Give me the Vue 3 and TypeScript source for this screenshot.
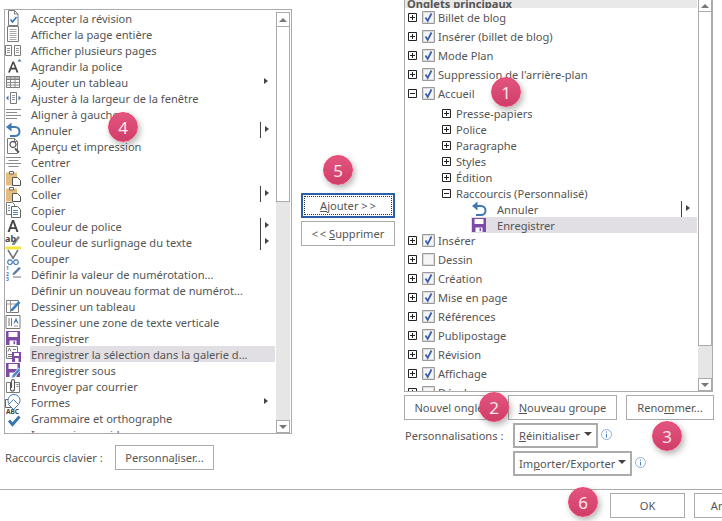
<script setup lang="ts">
interface Shape { d: string; f?: string; s?: string; w?: number }
const G = '#7a7a7a'
const B = '#3f78b5'
const P = '#7d4ba6'
const T = '#e6bd7c'
const saveBase: Shape[] = [
  { d: 'M1 1h14v14H1z', f: P },
  { d: 'M3.500 2h9v5h-9z', f: '#fff' },
  { d: 'M4.500 10.500h7V15h-7z', f: '#fff' },
  { d: 'M8.500 11.200h1.600v3H8.500z', f: P },
]
const icons: Record<string, Shape[]> = {
  check: [
    { d: 'M3.500 .5h6l3.500 3.500v11.500H3.500z', f: '#fff', s: G },
    { d: 'M9.500 .5V4H13', s: G },
    { d: 'M5.500 9.500l2 2.500 4-5', s: '#2f6fc0', w: 1.600 },
  ],
  page: [
    { d: 'M2.500 .5h11v15h-11z', f: '#fff', s: G },
    { d: 'M4.500 3.500h7M4.500 5.500h7M4.500 7.500h7M4.500 9.500h7M4.500 11.500h7M4.500 13.500h7', s: '#a8a8a8' },
  ],
  pages: [
    { d: 'M.5 3.500h6v10h-6zM9.500 3.500h6v10h-6z', f: '#fff', s: G },
    { d: 'M2 6.500h3M2 8.500h3M2 10.500h3M11 6.500h3M11 8.500h3M11 10.500h3', s: '#999' },
  ],
  grow: [
    { d: 'M3 14.500L7.500 3.500h1.500l4.500 11h-2l-1-3H6l-1 3zM6.700 9.800h3.100L8.200 5.400z', f: '#444' },
    { d: 'M12.500 3.500l2-2.500 2 2.500z', f: B },
  ],
  table: [
    { d: 'M1.500 2.500h13v11h-13z', f: '#fff', s: G },
    { d: 'M1.500 2.500h13v3h-13z', f: '#bbb', s: G },
    { d: 'M1.500 8.500h13M1.500 11h13M5.500 2.500v11M10 2.500v11', s: '#8a8a8a' },
  ],
  fit: [
    { d: 'M5.500 2.500h6v11h-6z', f: '#fff', s: G },
    { d: 'M7 5.500h3M7 7.500h3M7 9.500h3', s: '#999' },
    { d: 'M1 8l2.500-2.500v5zM16 8l-2.500-2.500v5z', f: B },
  ],
  left: [{ d: 'M1 3.500h15M1 6.500h11M1 9.500h15M1 12.500h11', s: '#8a8a8a' }],
  center: [{ d: 'M1 3.500h15M3.500 6.500h10M1 9.500h15M3.500 12.500h10', s: '#8a8a8a' }],
  undo: [
    { d: 'M4.500 5h5.500a4.500 4.500 0 0 1 0 9h-5', s: B, w: 2 },
    { d: 'M6.500 .5L1 5l5.500 4.500z', f: B },
  ],
  preview: [
    { d: 'M2.500 .5h7l3 3v12h-10z', f: '#fff', s: G },
    { d: 'M9.500 .5v3h3', s: G },
    { d: 'M8 9.500a3 3 0 1 0-.01 0z', f: '#fff', s: '#555', w: 1.300 },
    { d: 'M10 10.500l4 4', s: '#555', w: 1.800 },
  ],
  paste: [
    { d: 'M1 2.500h11v13H1z', f: T },
    { d: 'M4.500 1.500h4v2.500h-4z', f: '#fff', s: '#666' },
    { d: 'M7.500 7.500h5l3 3v5h-8z', f: '#fff', s: '#555' },
  ],
  copy: [
    { d: 'M1.500 .5h6l2 2v10h-8z', f: '#fff', s: G },
    { d: 'M6.500 4.500h6l3 3v8h-9z', f: '#fff', s: '#666' },
    { d: 'M3 3.500h2M3 6h2M3 8.500h2M8 8.500h5M8 10.500h5M8 12.500h5', s: '#5a87b8' },
  ],
  fontcolor: [{ d: 'M2.500 14L7 2h2l4.500 12h-2l-1.100-3H5.700l-1.100 3zM6.300 9.300h3.400L8 4.500z', f: '#444' }],
  mark: [
    { d: 'M.5 12.500h15.500v2.800H.5z', f: '#f5e63a' },
    { d: 'M7 9.500l6-7.500 2 1.500-5.500 7.500H7z', f: '#8a8a8a' },
  ],
  cut: [
    { d: 'M3 0l5.500 9M13 0L7.500 9', s: '#777', w: 1.600 },
    { d: 'M5 14.500a2.300 2.300 0 1 0-.01 0zM11 14.500a2.300 2.300 0 1 0-.01 0z', s: B, w: 1.200, f: '#fff' },
  ],
  num: [
    { d: 'M8 11h8', s: '#777' },
    { d: 'M8 7l6-6 1.800 1.500-6 6-2.400.6z', f: '#5a7da6' },
  ],
  none: [],
  draw: [
    { d: 'M1.500 2.500h12v12h-12z', f: '#fff', s: G },
    { d: 'M1.500 6h12M5.500 2.500v12', s: '#999' },
    { d: 'M6 11l7.500-8 2 1.800-7.500 8-2.500.6z', f: '#3a7fc4' },
  ],
  vtext: [
    { d: 'M1 1.500h14v13H1z', f: '#fff', s: G },
    { d: 'M4 4v8M6.500 4v8', s: '#777' },
    { d: 'M8.500 9.500L11 3.500l2.500 6h-1.200l-.5-1.400h-1.600l-.5 1.400z', f: '#4a7db5' },
    { d: 'M9 12h4', s: '#999' },
  ],
  save: saveBase,
  saveSel: [
    { d: 'M1.500 .5h11v12h-11z', f: '#fff', s: G },
    { d: 'M3 5.500l1.500-3.500 1.500 3.500M8 3.500h3M3 8.500h7M3 10.500h4', s: '#777' },
    { d: 'M7 6h9v10H7z', f: P },
    { d: 'M9 7h5v3H9zM10 12h3.500v4H10z', f: '#fff' },
  ],
  saveAs: [
    ...saveBase,
    { d: 'M7 13.500l6.500-7.500 2.300 2-6.500 7.500-2.800.7z', f: '#4e86c8', s: '#fff', w: .7 },
  ],
  mail: [
    { d: 'M1.500 4.500h13v10h-13z', f: '#fff', s: G },
    { d: 'M5.500 5v6a2 2 0 0 0 4 0V3a1.500 1.500 0 0 0-3 0v7', s: '#555', f: '#fff', w: 1.100 },
    { d: 'M11.500 6.500h2M11.500 8.500h2', s: '#777' },
  ],
  shapes: [
    { d: 'M.5 5.500h8v8h-8z', f: '#fff', s: '#666' },
    { d: 'M9 .5a6 6 0 1 1-.01 0z', f: '#fff', s: B },
    { d: 'M8.500 5.500l5 5-5 5-5-5z', f: '#fff', s: B },
  ],
  spell: [
    { d: 'M4 10.500l3.500 4 7-8', s: '#3674b5', w: 2.800 },
  ],
  quick: [
    { d: 'M1 10h5', s: '#666' },
    { d: 'M6 9h5v5H6z', f: '#fff', s: '#666' },
    { d: 'M12 9a3.500 3.500 0 1 0 .01 0z', f: '#4da98a' },
  ],
}
interface Row { t: string; i: string; sep?: boolean; arrow?: boolean; sel?: boolean; tag?: string }
const commands: Row[] = [
  { t: 'Accepter la révision', i: 'check' },
  { t: 'Afficher la page entière', i: 'page' },
  { t: 'Afficher plusieurs pages', i: 'pages' },
  { t: 'Agrandir la police', i: 'grow' },
  { t: 'Ajouter un tableau', i: 'table', arrow: true },
  { t: 'Ajuster à la largeur de la fenêtre', i: 'fit' },
  { t: 'Aligner à gauche', i: 'left' },
  { t: 'Annuler', i: 'undo', sep: true, arrow: true },
  { t: 'Aperçu et impression', i: 'preview' },
  { t: 'Centrer', i: 'center' },
  { t: 'Coller', i: 'paste' },
  { t: 'Coller', i: 'paste', sep: true, arrow: true },
  { t: 'Copier', i: 'copy' },
  { t: 'Couleur de police', i: 'fontcolor', sep: true, arrow: true },
  { t: 'Couleur de surlignage du texte', i: 'mark', tag: 'ab', sep: true, arrow: true },
  { t: 'Couper', i: 'cut' },
  { t: 'Définir la valeur de numérotation...', i: 'num', tag: 'n' },
  { t: 'Définir un nouveau format de numérot...', i: 'none' },
  { t: 'Dessiner un tableau', i: 'draw' },
  { t: 'Dessiner une zone de texte verticale', i: 'vtext' },
  { t: 'Enregistrer', i: 'save' },
  { t: 'Enregistrer la sélection dans la galerie d...', i: 'saveSel', sel: true },
  { t: 'Enregistrer sous', i: 'saveAs' },
  { t: 'Envoyer par courrier', i: 'mail' },
  { t: 'Formes', i: 'shapes', arrow: true },
  { t: 'Grammaire et orthographe', i: 'spell', tag: 'ABC' },
  { t: 'Impression rapide', i: 'quick' },
]
const tabsTop = [
  { t: 'Billet de blog', c: true },
  { t: 'Insérer (billet de blog)', c: true },
  { t: 'Mode Plan', c: true },
  { t: "Suppression de l'arrière-plan", c: true },
]
const groups = ['Presse-papiers', 'Police', 'Paragraphe', 'Styles', 'Édition']
const tabsBottom = [
  { t: 'Insérer', c: true },
  { t: 'Dessin', c: false },
  { t: 'Création', c: true },
  { t: 'Mise en page', c: true },
  { t: 'Références', c: true },
  { t: 'Publipostage', c: true },
  { t: 'Révision', c: true },
  { t: 'Affichage', c: true },
  { t: 'Développeur', c: false },
]
const badges = [
  { n: 1, cls: 'b1' }, { n: 2, cls: 'b2' }, { n: 3, cls: 'b3' },
  { n: 4, cls: 'b4' }, { n: 5, cls: 'b5' }, { n: 6, cls: 'b6' },
]
</script>

<template>
  <div class="dialog">
    <div class="main">
      <section class="col-left">
        <div class="listbox cmd-box">
          <div class="viewport">
            <div v-for="(r, k) in commands" :key="k" class="cmd">
              <span class="ic">
                <svg width="16" height="16" viewBox="0 0 16 16">
                  <path v-for="(s, j) in icons[r.i]" :key="j" :d="s.d" :fill="s.f || 'none'" :stroke="s.s || 'none'" :stroke-width="s.w || 1" />
                </svg>
                <span v-if="r.tag === 'ab'" class="tag tag-ab">ab</span>
                <span v-if="r.tag === 'ABC'" class="tag tag-abc">ABC</span>
                <span v-if="r.tag === 'n'" class="tag tag-n">1<br>2<br>3</span>
              </span>
              <div class="cmd-body" :class="{ sel: r.sel }">
                <span class="cmd-label">{{ r.t }}</span>
                <span class="tail" :class="{ sep: r.sep }"><i v-if="r.arrow" class="tri"></i></span>
              </div>
            </div>
          </div>
          <div class="scroll">
            <div class="sb-btn"><i class="up"></i></div>
            <div class="thumb thumb-l"></div>
            <div class="track"></div>
            <div class="sb-btn sb-down"><i class="down"></i></div>
          </div>
        </div>
        <div class="shortcut">
          <span class="shortcut-label">Raccourcis clavier :</span>
          <button class="btn btn-perso">Personna<u>l</u>iser...</button>
        </div>
      </section>

      <section class="col-mid">
        <button class="btn btn-add"><span class="dots"><span><u>A</u>jouter &gt;&thinsp;&gt;</span></span></button>
        <button class="btn btn-del">&lt;&thinsp;&lt; <u>S</u>upprimer</button>
      </section>

      <section class="col-right">
        <div class="listbox tree-box">
          <div class="viewport">
            <div class="tree-head">Onglets principaux</div>
            <div v-for="x in tabsTop" :key="x.t" class="tab">
              <svg class="pm" width="9" height="9" viewBox="0 0 9 9"><path d="M.5 .5h8v8h-8zM2 4.500h5M4.500 2v5" fill="#fff" stroke="#222" /></svg>
              <svg class="cb" width="13" height="13" viewBox="0 0 13 13"><path d="M.5 .5h12v12H.5z" fill="#dcdcdc" stroke="#9a9a9a" /><path d="M2 2h9v9H2z" fill="#f6f6f6" /><path d="M3.500 6.500l2.200 3.500 3.800-7.500" fill="none" stroke="#3b5fae" stroke-width="1.800" /></svg>
              <span>{{ x.t }}</span>
            </div>
            <div class="tab">
              <svg class="pm" width="9" height="9" viewBox="0 0 9 9"><path d="M.5 .5h8v8h-8zM2 4.500h5" fill="#fff" stroke="#222" /></svg>
              <svg class="cb" width="13" height="13" viewBox="0 0 13 13"><path d="M.5 .5h12v12H.5z" fill="#dcdcdc" stroke="#9a9a9a" /><path d="M2 2h9v9H2z" fill="#f6f6f6" /><path d="M3.500 6.500l2.200 3.500 3.800-7.500" fill="none" stroke="#3b5fae" stroke-width="1.800" /></svg>
              <span>Accueil</span>
            </div>
            <div class="subs">
              <div v-for="g in groups" :key="g" class="group">
                <svg width="9" height="9" viewBox="0 0 9 9"><path d="M.5 .5h8v8h-8zM2 4.500h5M4.500 2v5" fill="#fff" stroke="#222" /></svg>
                <span>{{ g }}</span>
              </div>
              <div class="group">
                <svg width="9" height="9" viewBox="0 0 9 9"><path d="M.5 .5h8v8h-8zM2 4.500h5" fill="#fff" stroke="#222" /></svg>
                <span>Raccourcis (Personnalisé)</span>
              </div>
              <div class="leaf">
                <svg width="16" height="16" viewBox="0 0 16 16"><path v-for="(s, j) in icons.undo" :key="j" :d="s.d" :fill="s.f || 'none'" :stroke="s.s || 'none'" :stroke-width="s.w || 1" /></svg>
                <span class="leaf-label">Annuler</span>
                <span class="tail sep"><i class="tri"></i></span>
              </div>
              <div class="leaf sel">
                <svg width="16" height="16" viewBox="0 0 16 16"><path v-for="(s, j) in icons.save" :key="j" :d="s.d" :fill="s.f || 'none'" /></svg>
                <span class="leaf-label">Enregistrer</span>
              </div>
            </div>
            <div class="after">
              <div v-for="x in tabsBottom" :key="x.t" class="tab">
                <svg class="pm" width="9" height="9" viewBox="0 0 9 9"><path d="M.5 .5h8v8h-8zM2 4.500h5M4.500 2v5" fill="#fff" stroke="#222" /></svg>
                <svg class="cb" width="13" height="13" viewBox="0 0 13 13"><path d="M.5 .5h12v12H.5z" fill="#dcdcdc" stroke="#9a9a9a" /><path d="M2 2h9v9H2z" fill="#f6f6f6" /><path v-if="x.c" d="M3.500 6.500l2.200 3.500 3.800-7.500" fill="none" stroke="#3b5fae" stroke-width="1.800" /></svg>
                <span>{{ x.t }}</span>
              </div>
            </div>
          </div>
          <div class="scroll">
            <div class="sb-btn sb-top"><i class="up"></i></div>
            <div class="thumb thumb-r"></div>
            <div class="track"></div>
            <div class="sb-btn sb-down"><i class="down"></i></div>
          </div>
        </div>
        <div class="tree-actions">
          <button class="btn btn-tab">Nouvel ongle<u>t</u></button>
          <button class="btn btn-group"><u>N</u>ouveau groupe</button>
          <button class="btn btn-rename">Reno<u>m</u>mer...</button>
        </div>
        <div class="perso">
          <span class="perso-label">Personnalisations :</span>
          <div class="perso-lines">
            <div class="perso-line">
              <button class="btn drop drop-a"><span><u>R</u>éinitialiser</span><i class="caret"></i></button>
              <svg class="info" width="11" height="11" viewBox="0 0 11 11"><circle cx="5.500" cy="5.500" r="5" fill="#fff" stroke="#8fb0de" /><path d="M5.500 2.500v1.200M5.500 4.800v3.700" stroke="#4d7fc4" /></svg>
            </div>
            <div class="perso-line">
              <button class="btn drop drop-b"><span>Im<u>p</u>orter/Exporter</span><i class="caret"></i></button>
              <svg class="info" width="11" height="11" viewBox="0 0 11 11"><circle cx="5.500" cy="5.500" r="5" fill="#fff" stroke="#8fb0de" /><path d="M5.500 2.500v1.200M5.500 4.800v3.700" stroke="#4d7fc4" /></svg>
            </div>
          </div>
        </div>
      </section>
    </div>

    <footer class="foot">
      <button class="btn btn-ok">OK</button>
      <button class="btn btn-cancel">Annuler</button>
    </footer>

    <div v-for="b in badges" :key="b.n" class="badge" :class="b.cls">{{ b.n }}</div>
  </div>
</template>

<style>
html, body { margin: 0; background: #fff; overflow: hidden; }
</style>

<style scoped>
.dialog {
  position: relative; width: 722px; height: 521px; overflow: hidden; background: #fff;
  font-family: "Noto Sans", sans-serif; font-size: 11.1px; color: #555;
  display: flex; flex-direction: column;
}
.main { display: flex; height: 489px; flex: none; }
.col-left { width: 288px; margin: 9px 0 0 4px; flex: none; }
.listbox { display: flex; box-sizing: border-box; border: 1px solid #ababab; background: #fff; }
.cmd-box { height: 425px; }
.viewport { flex: 1; min-width: 0; overflow: hidden; }
.cmd { display: flex; height: 16px; line-height: 18px; white-space: nowrap; }
.ic { width: 25px; flex: none; position: relative; height: 16px; }
.ic svg { display: block; overflow: visible; }
.tag { position: absolute; font-weight: 700; color: #444; line-height: 1; }
.tag-ab { left: 0; top: 0; font-size: 9px; }
.tag-abc { left: 1px; top: -1px; font-size: 6.500px; }
.tag-n { left: 1px; top: 0; font-size: 5px; color: #3f78b5; line-height: 5.500px; }
.cmd-body { flex: 1; min-width: 0; display: flex; padding-left: 1px; height: 16px; }
.cmd-body.sel, .leaf.sel { background: #e1dfe4; }
.cmd-label { flex: 1; }
.tail { flex: none; width: 16px; height: 16px; position: relative; box-sizing: border-box; }
.cmd .tail { width: 15px; }
.tail.sep { border-left: 1px solid #444; }
.tri {
  position: absolute; left: 4px; top: 4px; width: 0; height: 0;
  border-left: 4px solid #444; border-top: 3.500px solid transparent; border-bottom: 3.500px solid transparent;
}
.scroll { width: 15px; flex: none; display: flex; flex-direction: column; padding-top: 2px; box-sizing: border-box; background: #fff; }
.cmd-box .scroll { width: 16px; padding-right: 1px; }
.sb-btn { box-sizing: border-box; height: 15px; border: 1px solid #ababab; background: #fff; margin-left: 1px; width: 14px; display: flex; align-items: center; justify-content: center; flex: none; }
.sb-top { height: 12px; margin-top: -2px; border-top: 0; }
.sb-down { background: #fff; height: 13px; }
.up { width: 0; height: 0; border-left: 4px solid transparent; border-right: 4px solid transparent; border-bottom: 4px solid #777; }
.down { width: 0; height: 0; border-left: 4px solid transparent; border-right: 4px solid transparent; border-top: 4px solid #777; }
.thumb { box-sizing: border-box; border: 1px solid #ababab; border-top: 0; background: #fff; margin-left: 1px; width: 14px; flex: none; }
.thumb-l { height: 175px; }
.thumb-r { height: 334px; }
.track { flex: 1; background: #e6e6e6; margin-left: 1px; }
.shortcut { display: flex; align-items: center; margin: 11px 0 0 1px; }
.shortcut-label { width: 110px; flex: none; }
.btn {
  box-sizing: border-box; height: 25px; padding: 0; background: #fff; border: 1px solid #ababab;
  font: inherit; color: #555; text-align: center; flex: none;
}
.btn-perso { width: 99px; }
.col-mid { width: 112px; flex: none; box-sizing: border-box; padding: 193px 0 0 9px; display: flex; flex-direction: column; gap: 3px; }
.btn-add { width: 94px; border: 2px solid #2b5fa8; padding: 1px; }
.dots { display: flex; align-items: center; justify-content: center; height: 100%; outline: 1px dotted #333; outline-offset: -1px; }
.btn-del { width: 94px; }
.col-right { width: 309px; flex: none; }
.tree-box { height: 392px; width: 309px; border-top: 0; }
.tree-head { height: 8px; line-height: 7px; background: #e9e9e9; font-weight: 700; padding-left: 2px; overflow: hidden; }
.tab { height: 19px; display: flex; align-items: center; white-space: nowrap; }
.pm { margin-left: 3px; flex: none; }
.cb { margin-left: 5px; flex: none; }
.tab span { margin-left: 3px; }
.subs { padding-top: 2px; }
.group { height: 16px; display: flex; align-items: center; padding-left: 37px; gap: 5px; white-space: nowrap; }
.leaf { height: 16px; margin-left: 66px; display: flex; align-items: center; white-space: nowrap; }
.leaf-label { flex: 1; margin-left: 10px; }
.after { margin-top: -2px; }
.tree-actions { display: flex; margin-top: 3px; }
.btn-tab { width: 94px; margin-right: 10px; }
.btn-group { width: 109px; margin-right: 9px; }
.btn-rename { width: 88px; }
.perso { display: flex; margin-top: 3px; }
.perso-label { width: 109px; padding-left: 1px; line-height: 26px; white-space: nowrap; box-sizing: border-box; }
.perso-lines { display: flex; flex-direction: column; gap: 3px; }
.perso-line { display: flex; align-items: center; gap: 3px; }
.drop { border-width: 2px; display: flex; align-items: center; justify-content: space-between; padding: 0 4px; }
.drop-a { width: 85px; }
.drop-b { width: 119px; }
.caret { width: 0; height: 0; border-left: 4px solid transparent; border-right: 4px solid transparent; border-top: 4px solid #444; margin-top: -3px; }
.info { margin-top: -2px; }
.foot { box-sizing: border-box; border-top: 1px solid #ababab; flex: 1; display: flex; gap: 9px; padding: 3px 0 0 610px; }
.btn-ok { width: 75px; }
.btn-cancel { width: 75px; }
.badge {
  position: absolute; box-sizing: border-box; width: 30px; height: 30px; border-radius: 50%;
  display: flex; align-items: center; justify-content: center;
  background: linear-gradient(180deg, #e2557f 0%, #cf3e68 100%);
  border: 1.500px solid #f0406f; color: #fbe6ec; font-size: 17px;
  box-shadow: 2px 3px 6px rgba(0, 0, 0, .3);
}
.b1 { left: 491px; top: 77px; }
.b2 { left: 479px; top: 392px; }
.b3 { left: 652px; top: 421px; }
.b4 { left: 108px; top: 112px; }
.b5 { left: 323px; top: 155px; }
.b6 { left: 568px; top: 487px; }
</style>
